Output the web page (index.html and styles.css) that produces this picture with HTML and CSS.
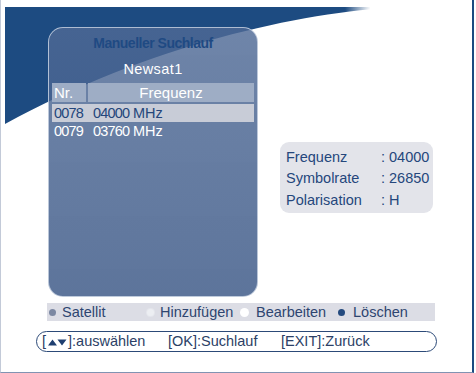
FILE: index.html
```html
<!DOCTYPE html>
<html>
<head>
    <meta charset="utf-8">
    <title>Manueller Suchlauf</title>
    <link rel="stylesheet" href="styles.css">
</head>
<body>
<div class="tv">
    <svg class="swoosh" width="476" height="130" viewBox="0 0 476 130">
        <defs>
            <linearGradient id="fade" x1="0" x2="1" y1="0" y2="0">
                <stop offset="0.80" stop-color="#1d4b81"/>
                <stop offset="0.86" stop-color="#1d4b81" stop-opacity="0"/>
            </linearGradient>
        </defs>
        <path d="M5,7 H430 L400,7 C300,12 150,45 5,124 Z" fill="url(#fade)"/>
    </svg>
    <div class="main">
        <div class="scan-panel">
            <h3 class="scan-title">Manueller Suchlauf</h3>
            <div class="sat-name">Newsat1</div>
            <div class="scan-head">
                <span class="col-nr">Nr.</span>
                <span class="col-freq">Frequenz</span>
            </div>
            <div class="scan-row selected">
                <span>0078</span><span>04000</span><span>MHz</span>
            </div>
            <div class="scan-row">
                <span>0079</span><span>03760</span><span>MHz</span>
            </div>
        </div>
        <div class="info-box">
            <span>Frequenz</span><span>: 04000</span>
            <span>Symbolrate</span><span>: 26850</span>
            <span>Polarisation</span><span>: H</span>
        </div>
    </div>
    <div class="legend">
        <span class="key"><i class="dot gray"></i>Satellit</span>
        <span class="key"><i class="dot faint"></i>Hinzufügen</span>
        <span class="key"><i class="dot white"></i>Bearbeiten</span>
        <span class="key"><i class="dot blue"></i>Löschen</span>
    </div>
    <div class="help-bar">
        <span>[<svg class="arrows" width="19" height="7" viewBox="0 0 19 7" aria-label="▲▼"><path d="M0,6.5 L4.5,0.5 L9,6.5 Z M9.5,0.5 H18.5 L14,6.5 Z"/></svg>]:auswählen</span>
        <span>[OK]:Suchlauf</span>
        <span>[EXIT]:Zurück</span>
    </div>
</div>
</body>
</html>
```

FILE: styles.css
```css
html, body{
    margin: 0;
    padding: 0;
    background: #fff;
}
.tv{
    position: relative;
    box-sizing: border-box;
    width: 474px;
    height: 373px;
    padding-top: 27px;
    border-left: 1px solid #c3cad8;
    border-right: 2px solid #1d4b81;
    border-bottom: 1px solid #8193b2;
    font-family: "Liberation Sans", Arial, sans-serif;
    overflow: hidden;
}
.swoosh{
    position: absolute;
    left: -1px;
    top: 0;
}
.main{
    position: relative;
    display: flex;
    align-items: flex-start;
    height: 270px;
}
.scan-panel{
    box-sizing: border-box;
    width: 210px;
    height: 270px;
    margin-left: 47px;
    padding: 0 3px;
    border-radius: 15px;
    border: 1px solid rgba(225,232,242,0.7);
    background: linear-gradient(to bottom, rgba(79,106,150,0.82), rgba(62,90,136,0.84));
}
.scan-title{
    margin: 6px 0 0;
    height: 18px;
    line-height: 18px;
    font-size: 14px;
    font-weight: bold;
    text-align: center;
    color: #1f4a83;
    letter-spacing: -0.5px;
}
.sat-name{
    margin-top: 7px;
    height: 20px;
    line-height: 20px;
    font-size: 14.5px;
    color: #fff;
    text-align: center;
    letter-spacing: 0.4px;
}
.scan-head{
    display: flex;
    gap: 2px;
    margin-top: 4px;
    height: 19px;
    line-height: 19px;
    font-size: 15px;
    color: #fff;
}
.scan-head span{
    background: #9eadc5;
}
.col-nr{
    width: 32px;
    padding-left: 2px;
}
.col-freq{
    flex: 1;
    text-align: center;
}
.scan-row{
    display: grid;
    grid-template-columns: 39px 40px auto;
    margin-top: 2px;
    height: 18px;
    line-height: 18px;
    padding-left: 2px;
    font-size: 14.5px;
    letter-spacing: -0.8px;
    color: #fff;
}
.scan-row span:last-child{
    letter-spacing: 0;
}
.scan-row + .scan-row{
    margin-top: 0;
}
.scan-row.selected{
    background: #c8ccd7;
    color: #24467b;
}
.info-box{
    display: grid;
    grid-template-columns: 95px auto;
    box-sizing: border-box;
    width: 153px;
    height: 71px;
    margin: 115px 0 0 22px;
    padding: 7px 0 0 6px;
    border-radius: 9px;
    background: #e3e4ea;
    font-size: 14.5px;
    line-height: 17.5px;
    color: #25477c;
}
.legend{
    display: flex;
    width: 388px;
    height: 18px;
    margin: 6px 0 0 46px;
    background: #dcdde5;
    font-size: 14.5px;
    line-height: 18px;
    color: #2e4570;
}
.key{
    display: flex;
    align-items: center;
}
.key:nth-child(1){ width: 94px; padding-left: 2px; }
.key:nth-child(2){ width: 93px; padding-left: 4px; }
.key:nth-child(3){ width: 98px; }
.dot{
    display: inline-block;
    width: 7px;
    height: 7px;
    border-radius: 50%;
    margin-right: 6px;
}
.dot.gray{ background: #7c88a2; }
.dot.faint{ background: #eceef2; box-shadow: 0 0 0 1px #e4e6ec; }
.dot.white{ background: #fff; width: 9px; height: 9px; margin-right: 7px; }
.dot.blue{ background: #244a7e; margin-right: 8px; }
.help-bar{
    display: flex;
    box-sizing: border-box;
    width: 401px;
    height: 21px;
    margin: 10px 0 0 35px;
    padding-left: 5px;
    border: 1.5px solid #2c4a78;
    border-radius: 11px;
    font-size: 14.5px;
    line-height: 18px;
    color: #2c3f66;
}
.help-bar span:nth-child(1){ width: 126px; }
.help-bar span:nth-child(2){ width: 113px; }
.arrows{
    fill: #1f3f70;
    margin: 0 1px 0 2px;
    vertical-align: 0;
}
```
